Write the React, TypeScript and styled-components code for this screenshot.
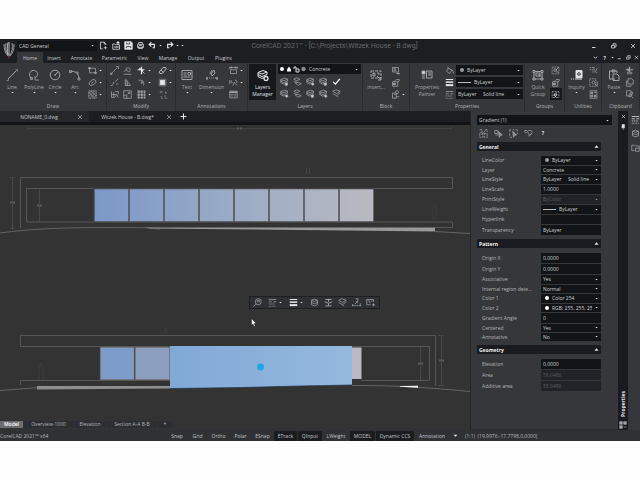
import React from 'react';
import styled, { createGlobalStyle } from 'styled-components';

const GlobalStyle = createGlobalStyle`
  * { box-sizing: border-box; }
  body { margin: 0; background: #fefefe; }
  button, input, select { font: inherit; color: inherit; margin: 0; padding: 0; border: 0; border-radius: 0; background: transparent; }
`;

/* ---------- icons, all on a 12 x 12 grid ---------- */
const stack = (
  <>
    <path d="M1 3.500 6 1.500l4 1.500-5 2z" />
    <path d="M1 5.500l4 2 5-2M1 7.500l4 2 5-2M1 3.500v4M10 3v2.500" />
  </>
);
const art: Record<string, React.ReactNode> = {
  line: (<><path d="M2 10 10.500 1.500" /><path d="M.5 11.500h2v-2M9.500.5h2v2" strokeWidth=".6" /></>),
  polyline: (<><path d="M3.500 9.500C-1 5 3 .5 6.500 1.500S11 6 7.500 8.500" /><path d="M7 7v4h4M2.500 8.500h2v2h-2z" strokeWidth=".8" /></>),
  circle: (<><circle cx="6" cy="6" r="4.800" /><path d="M6 6l3-3M5 6h2" /></>),
  arc: (<><path d="M1.500 2.500C6 1.500 10 5 10 9.500" /><path d="M.5 1.500h2v2h-2zM9 9h2v2H9zM7 3h2v2" strokeWidth=".8" /></>),
  rect: (<><path d="M2 3h8v6H2z" /><path d="M1 2h2v2H1zM9 8h2v2H9z" fill="currentColor" /></>),
  ellipse: (<><ellipse cx="6" cy="6" rx="5" ry="3.200" transform="rotate(-35 6 6)" /><path d="M4.500 7.500l3-3" /></>),
  hatch: (<><path d="M1 1h10v10H1z" strokeDasharray="2 1" /><path d="M1 5l4-4M1 9l8-8M3 11l8-8M7 11l4-4M1 3l8 8M4 1l7 7" /></>),
  trim: (<><path d="M2 10l8-8" /><path d="M.5 9.500h2v2h-2zM8 .5h3.500V4" /></>),
  offset: (<><path d="M4 4a3 3 0 1 1 4 4l-2-1zM1 11h10M1 8l4-4" /></>),
  move: (<><path d="M1 5h9M6 1v10M3 3l5 4" strokeWidth="1.600" /><path d="M7 7l3 3" /></>),
  erase: (<><path d="M1.500 8 7 2h3l1 2-5.500 6h-3z" /><path d="M4 5.500l3 3" /></>),
  break: (<><path d="M2 10l3-3M7 5l4-4" /><path d="M1 10h2M4 6h2M8 8h3" /></>),
  mirror: (<><path d="M3 2v8h7L4 2v8" /><path d="M6 6v4" /></>),
  fillet: (<><path d="M2 3h3c4 0 4 2 4 7" /><path d="M5 6h3M6.500 4v4" /></>),
  glow: (<><path d="M3 3h6v6H3z" fill="currentColor" /><path d="M1.500 1.500h9v9h-9z" strokeWidth=".4" /></>),
  stretch: (<><path d="M2 2v8h4L9 6l2 4M2 6h6M7 2h4v4M5 3v6" /></>),
  scale: (<><path d="M1 1h10v10H1zM1 7h4v4M6 6l3-3M6.500 3H9v2.500" /></>),
  pattern: (<><path d="M1 1h2.500v2.500H1zM5 1h2.500v2.500H5zM9 1h2v2.500H9zM1 5h2.500v2.500H1zM5 5h2.500v2.500H5zM9 5h2v2.500H9zM1 9h2.500v2H1zM5 9h2.500v2H5zM9 9h2v2H9z" fill="currentColor" strokeWidth=".5" /></>),
  explode: (<><path d="M3 1v3M1 3h4M8 4h3M9 2v3M3 8v3h2M8 7v4h3" strokeDasharray="2 1" /></>),
  text: (<><path d="M1 1.500h10v9H1z" /><path d="M2.500 4h3M2.500 6h3M7 3.500h2.500V6H7zM2.500 8h7" /></>),
  dimension: (<><path d="M5 5l3-4 1 3-3 3zM6 1l-2 4" /><path d="M0 9h2m1 0h1m1 0h1m1 0h1m1 0h3M1 8v3M11 8v3" /></>),
  linear: (<><path d="M1 2h10M1 1v3M11 1v3M2 5h8v5H2z" /><path d="M4 1l-2 1 2 1M8 1l2 1-2 1" /></>),
  leader: (<><path d="M1 3v5M3 3v3h2M8 3a2 2 0 1 1-1 3l-2 4M9 8l2 2" /></>),
  table: (<><path d="M1 1.500h10v9H1z" /><path d="M1 3h10" strokeWidth="2" /><path d="M4 3v7M8 3v7M1 6h10M1 8h10" strokeWidth=".5" /></>),
  layers: stack,
  layersManager: (<>{stack}<circle cx="9" cy="9.500" r="2" fill="#17181c" strokeWidth="1.300" /></>),
  layerA: (<>{stack}<circle cx="9" cy="9.500" r="1.500" fill="#dcdde0" /></>),
  layerB: (<><path d="M1 3 5 1l4 2-4 2zM3 8l4-1 4 2-4 2z" /><path d="M1 6l4 1" /></>),
  layerC: (<>{stack}<path d="M7 8h3v3H7z" fill="#dcdde0" /></>),
  check: <path d="M1.500 6.500l3 3 6-7" strokeWidth="1.800" stroke="#fff" />,
  insert: (<><path d="M1 2h10v7H1z" strokeDasharray="3 1" /><path d="M3 4h2v3H3zM7 4h2v2M7 7l4 4M11 8v3H8" /></>),
  block: (<><path d="M2 2h8v6H2zM4 3.500h2v3H4z" /><path d="M7 10h5M9.500 8v4" /></>),
  editBlock: (<><path d="M2 5h7v6H2zM4 5l3-3h4v2L8 6" /><path d="M3 7h3v2H3z" fill="currentColor" /></>),
  attr: (<><path d="M2 4h5v7H2zM4 6h2" /><circle cx="8" cy="3" r="2" /><path d="M7 9h4" /></>),
  painter: (<><path d="M1 2h3v3H1z" fill="#dcdde0" /><path d="M1 7h3M1 9h3" /><path d="M5.500 2H11v7H5.500zM7 4h3M7 6h3" /></>),
  bucket: (<><path d="M2 7l3-4 4 3-3 4zM4 4V1M8 4l3 3v3" /></>),
  weight: (<><path d="M1 2h10" strokeWidth="1.300" /><path d="M1 5.500h10" strokeWidth="2" /><path d="M1 9.500h10" strokeWidth="2.600" /></>),
  dashes: <path d="M1 2h10M1 5h4m2 0h4M1 8h2m1 0h2m1 0h2M1 11h1m1 0h1m1 0h1m1 0h1m1 0h1" />,
  group: (<><path d="M1 1.500h2v2H1zM9 1.500h2v2H9zM1 9h2v2H1zM9 9h2v2H9zM3 2.500h6M3 10h6M2 3.500V9M10 3.500V9" /><path d="M4 4h4v3H4zM6 6h2v2" /></>),
  editGroup: (<><path d="M1.500 1.500h9v9h-9z" strokeDasharray="2 1" /><path d="M4 4h3v3H4zM6 6l4-4M7 8h3" /></>),
  selectGroup: (<><path d="M1.500 2h9v8h-9z" strokeDasharray="1 1" /><path d="M4 5l4 1-2 3zM7 3v2M3 7h2" /></>),
  inquiry: (<><path d="M5 1.500h6V9H5z" fill="#e0e1e4" stroke="#e0e1e4" /><circle cx="8" cy="5" r="1.300" stroke="#36373b" /><path d="M0 10h1m1 0h1m1 0h7" strokeWidth="1.500" /></>),
  list: <path d="M1 2h2m1 0h4M1 5h2m1 0h4M4 8h2m1 0h1M8 8l3-5M9 9h2" />,
  region: (<><path d="M1 1h8v10H1z" strokeDasharray="2 1" /><circle cx="6" cy="6" r="2" /><path d="M8 8l3 3V5" /></>),
  calc: (<><path d="M1.500 1h9v10h-9z" /><path d="M3 3h2v2H3zM7 3h2v1M3 7h2v2H3zM7 7h2v2H7z" fill="currentColor" /></>),
  paste: (<><path d="M7 10H1.500V2H9v2M4 1h3v2H4z" /><path d="M5 5h4l2 2v4.500H5z" /></>),
  cut: (<><path d="M6 1v7M1 5h10M4 3v4" strokeWidth="1.500" /><circle cx="4.500" cy="9.500" r="1.300" /><circle cx="8" cy="9.500" r="1.300" /></>),
  copy: (<><path d="M4 1h5l2 2v5H4z" /><path d="M2 4v7h6V9M2 4h2" /></>),
  copyRef: (<><path d="M2 1h6v7H2zM8 3h2v3" /><circle cx="7" cy="7" r="2" /><path d="M9 9l2 2" /></>),
  newDoc: (<><path d="M5 10.500H2v-9h5l2 2v2M7 1.500V4h2" /><path d="M6.500 9h4M8.500 7v4" /></>),
  open: (<><path d="M1 4h3l1 1h5v6H1z" /><path d="M3 8h6M8 5V1M6 3l2-2 2 2" strokeWidth="1.400" /></>),
  save: (<><path d="M1 1h8.500L11 2.500V11H1z" fill="currentColor" /><path d="M3.500 2v2h4V2M3 9.500V7.500h6v2" stroke="#1d1e22" /></>),
  print: (<><path d="M2 4.500h8v4H2z" /><path d="M3.500 4V2h5v2M3.500 7v3h5V7M4 6h4" /></>),
  undo: <path d="M2 4.500h6.500v4.500H6M4.500 1.500l-3 3 3 3" strokeWidth="1.500" />,
  redo: <path d="M10 4.500H3.500v4.500H6M7.500 1.500l3 3-3 3" strokeWidth="1.500" />,
  min: <path d="M2 9h7" strokeWidth="1.800" />,
  restore: (<><path d="M1 5h6v5H1z" strokeWidth="1.500" /><path d="M4 4V1.500h6V8H8" strokeWidth="1.500" /></>),
  close: <path d="M2 2l8 8M10 2l-8 8" strokeWidth="1.500" />,
  plus: <path d="M6 1v10M1 6h10" strokeWidth="1.800" />,
  chevron: <path d="M2 4l4 4 4-4" strokeWidth="2" />,
  down: <path d="M1 4h10L6 9z" fill="currentColor" stroke="none" />,
  up: <path d="M1 9h10L6 3z" fill="currentColor" stroke="none" />,
  zoom: (<><circle cx="7" cy="5" r="4" /><path d="M4 8l-3.500 3.500M5 5h4M5 3.500h4" /></>),
  cursorSelect: (<><path d="M1 2h4v4H1zM2 8h3" /><path d="M6 3l5 5-2.500.5L7 11z" fill="#8b8c90" /></>),
  selectAll: (<><path d="M1 1h2M5 1h2M9 1h2v2M1 1v3M1 6v3M1 11h3M11 5v2" /><path d="M5 3l5 5-2.500.5L6 11z" fill="#8b8c90" /></>),
  quick: (<><path d="M1 2h4v3H1zM6 2h4l1 3-4 5" strokeDasharray="3 1" /><path d="M6 5l1 4 3-3" /></>),
  match: (<><path d="M1 1h3v3M8 1h3v3M1 5h4v6H1zM7 6h4v5H7z" strokeDasharray="3 1" /><path d="M4 7l5-5" /></>),
  cube: (<><path d="M2 3l4-1.500L10 3v6l-4 1.500L2 9z" /><path d="M2 3l4 1.500L10 3M2 6l4 1.500L10 6" /></>),
  updown: (<><path d="M2 2h8M6 1v4M1 5l5 2 5-2M6 7v3M2 10.500h8" strokeWidth="1.300" /></>),
  edge: (<><path d="M1 3 5 1l6 2-5 3zM1 6l5 3 5-4M6 9l2 2" /></>),
  angle: (<><path d="M5 1h3v3L4 8M5 4l3 3M0 10h2m1 0h2m1 0h2m1 0h3M1 8v3M11 7v4" /></>),
  note: (<><path d="M10 5V2H1v7h5" /><path d="M3 4h2v3M7 4h2M8 9h4M10 7v4" /></>),
  folder: (<><path d="M1 3h4l1 1h5v3M1 3v7h4" /><path d="M6 7h5v4H6z" /></>),
  pinned: (<><path d="M4 1h5v6H4z" fill="currentColor" /><path d="M2 7.500h8M6.500 8v4" /></>),
  dock: (<><path d="M1 1h4v4H1zM7 1h4v4H7zM1 7h4v4H1z" fill="currentColor" /><path d="M7 9h4" /></>),
};

const Svg = styled.svg<{ $size: number; $strong?: boolean }>`
  display: block;
  flex: none;
  width: ${(p) => p.$size}px;
  height: ${(p) => p.$size}px;
  fill: none;
  stroke: currentColor;
  color: ${(p) => (p.$strong ? '#e6e7ea' : '#a2a4a9')};
`;
const Icon = ({ name, size = 9, strong = false }: { name: string; size?: number; strong?: boolean }) => (
  <Svg $size={size} $strong={strong} viewBox="0 0 12 12" aria-hidden="true">{art[name]}</Svg>
);

/* ---------- shell ---------- */
const Window = styled.div`
  margin-top: 39px;
  min-width: 640px;
  background: #36373b;
  color: #b4b6ba;
  font: 5px/8px "Open Sans", "Noto Sans", sans-serif;
  overflow: hidden;
`;
const Header = styled.header`
  display: grid;
  grid-template-columns: 17px 1fr;
  background: #1d1e22;
`;
const LogoSvg = styled.svg`
  width: 14px;
  height: 20px;
  margin: 1px 0 0 2px;
`;
const TitleRow = styled.div`
  display: grid;
  grid-template-columns: 80px 88px 1fr 54px;
  align-items: center;
  height: 13px;
`;
const Title = styled.h1`
  margin: 0;
  text-align: center;
  font: 400 7px/10px Roboto, "Open Sans", sans-serif;
  color: #66686d;
  white-space: nowrap;
`;
const TitleCell = styled.div`
  padding-right: 102px;
`;
const WindowButtons = styled.div`
  display: flex;
  justify-content: space-between;
  padding: 0 3px 0 4px;
`;
const IconButton = styled.button<{ $w?: number; $h?: number; $dark?: boolean }>`
  display: flex;
  align-items: center;
  justify-content: center;
  flex: none;
  gap: 2px;
  width: ${(p) => p.$w ?? 12}px;
  height: ${(p) => p.$h ?? 12}px;
  color: #e0e1e4;
  background: ${(p) => (p.$dark ? '#17181c' : 'transparent')};
`;
const Quick = styled.div`
  display: flex;
  align-items: center;
`;
const TabRow = styled.nav`
  display: flex;
  height: 11px;
  align-items: stretch;
`;
const RibbonTab = styled.button<{ $w: number; $on?: boolean }>`
  width: ${(p) => p.$w}px;
  text-align: center;
  color: #c6c8cc;
  background: ${(p) => (p.$on ? '#36373b' : 'transparent')};
`;
const TabControls = styled.div`
  display: flex;
  align-items: center;
  justify-content: space-between;
  width: 49px;
  margin-left: auto;
  color: #e0e1e4;
`;

/* ---------- ribbon ---------- */
const Ribbon = styled.section`
  display: grid;
  grid-template-columns: 107fr 69fr 72fr 115fr 47fr 115fr 40fr 37fr 38fr;
  height: 48px;
  background: #36373b;
`;
const Group = styled.div`
  display: flex;
  flex-direction: column;
  min-width: 0;
  border-right: 1px solid #2a2b2f;
`;
const GroupBody = styled.div`
  display: flex;
  justify-content: center;
  height: 39px;
  padding-top: 1px;
`;
const GroupName = styled.div`
  text-align: center;
  line-height: 8px;
`;
const BigButton = styled.button<{ $w: number; $dark?: boolean }>`
  display: flex;
  flex-direction: column;
  align-items: center;
  flex: none;
  width: ${(p) => p.$w}px;
  height: 36px;
  padding-top: 5px;
  line-height: 7px;
  background: ${(p) => (p.$dark ? '#17181c' : 'transparent')};
  color: ${(p) => (p.$dark ? '#dfe0e3' : '#a6a8ac')};
`;
const BigLabel = styled.span`
  margin-top: 3px;
  white-space: nowrap;
`;
const Small = styled.div<{ $cols: string }>`
  display: grid;
  grid-template-columns: ${(p) => p.$cols};
  grid-auto-rows: 12px;
  align-items: center;
`;
const Big = ({ icon, label, w, menu = false, dark = false, size = 12 }: { icon: string; label: React.ReactNode; w: number; menu?: boolean; dark?: boolean; size?: number }) => (
  <BigButton type="button" $w={w} $dark={dark}>
    <Icon name={icon} size={size} strong={dark} />
    <BigLabel>{label}</BigLabel>
    {menu && <Icon name="down" size={3} strong />}
  </BigButton>
);
const Tool = ({ icon, menu = false, w = 12, h = 12, dark = false, size = 9, strong = false }: { icon: string; menu?: boolean; w?: number; h?: number; dark?: boolean; size?: number; strong?: boolean }) => (
  <IconButton type="button" $w={w} $h={h} $dark={dark} aria-label={icon}>
    <Icon name={icon} size={size} strong={strong || dark} />
    {menu && <Icon name="down" size={3} strong />}
  </IconButton>
);

/* ---------- fields ---------- */
const Field = styled.span<{ $h: number; $disabled?: boolean }>`
  display: flex;
  align-items: center;
  gap: 3px;
  min-width: 0;
  height: ${(p) => p.$h}px;
  padding: 0 3px 0 2px;
  color: ${(p) => (p.$disabled ? '#5c5e63' : '#cfd1d4')};
  background: ${(p) => (p.$disabled ? '#222328' : '#131418')};
`;
const NativeSelect = styled.select`
  appearance: none;
  flex: 1;
  min-width: 0;
  height: 8px;
  line-height: 8px;
  outline: none;
  &:disabled { color: inherit; opacity: 1; }
`;
const NativeInput = styled.input`
  flex: 1;
  min-width: 0;
  width: 100%;
  height: 8px;
  outline: none;
`;
const Dot = styled.i<{ $bright?: boolean }>`
  flex: none;
  width: 4px;
  height: 4px;
  margin-left: 2px;
  border-radius: 50%;
  background: ${(p) => (p.$bright ? '#ffffff' : '#9b9da1')};
`;
const Rule = styled.i`
  flex: none;
  width: 13px;
  height: 1px;
  background: #b9bbbf;
`;
const Choice = ({ id, label, value, mark, h = 9, disabled = false }: { id?: string; label?: string; value: string; mark?: React.ReactNode; h?: number; disabled?: boolean }) => (
  <Field $h={h} $disabled={disabled}>
    {mark}
    <NativeSelect id={id} aria-label={label} disabled={disabled} defaultValue={value}>
      <option>{value}</option>
    </NativeSelect>
    <Icon name="down" size={3} strong={!disabled} />
  </Field>
);
const SOLID = 'ByLayer\u00a0\u00a0\u00a0\u00a0\u00a0Solid line';

const LayerColumn = styled.div`
  display: flex;
  flex-direction: column;
  gap: 1px;
  width: 83px;
  margin-left: 2px;
`;
const LayerMarks = styled.svg`
  width: 26px;
  height: 8px;
  flex: none;
`;
const PropertyFields = styled.div`
  display: grid;
  grid-auto-rows: 12px;
  align-items: center;
  flex: 0 1 67px;
`;

/* ---------- work area ---------- */
const Work = styled.div`
  display: grid;
  grid-template-columns: 1fr 148px 10px 12px;
  background: #36373b;
`;
const Editor = styled.main`
  min-width: 0;
  background: #333333;
`;
const DocTabs = styled.div`
  display: flex;
  align-items: center;
  height: 14px;
  border-bottom: 3px solid #121316;
  background: #1d1e22;
`;
const DocTab = styled.button<{ $on?: boolean }>`
  display: flex;
  align-items: center;
  justify-content: flex-end;
  gap: ${(p) => (p.$on ? 12 : 19)}px;
  width: 89px;
  height: 11px;
  padding-right: 6px;
  white-space: nowrap;
  color: #c2c4c8;
  background: ${(p) => (p.$on ? '#1d1e22' : '#26272b')};
`;
const Canvas = styled.div`
  position: relative;
`;
const Drawing = styled.svg`
  display: block;
  width: 100%;
  height: auto;
`;
const FloatBar = styled.div`
  position: absolute;
  left: 53%;
  top: 171px;
  display: flex;
  align-items: center;
  justify-content: space-between;
  width: 131px;
  height: 13px;
  padding: 0 1px;
  border: 1px solid #1e1f23;
  background: #2f3034;
`;
const SheetTabs = styled.div`
  display: flex;
  align-items: center;
  height: 12px;
  gap: 1px;
`;
const SheetTab = styled.button<{ $w: number; $on?: boolean }>`
  width: ${(p) => p.$w}px;
  height: 7px;
  line-height: 7px;
  white-space: nowrap;
  color: ${(p) => (p.$on ? '#ffffff' : '#b4b6ba')};
  font-weight: ${(p) => (p.$on ? 600 : 400)};
  background: ${(p) => (p.$on ? '#6a6c70' : '#2d2e31')};
`;

/* ---------- properties panel ---------- */
const Panel = styled.aside`
  padding: 4px 6px 0;
  border-left: 1px solid #242529;
  border-bottom: 1px solid #2b2c30;
`;
const PanelTools = styled.div`
  display: flex;
  gap: 3px;
  height: 17px;
  padding-top: 2px;
`;
const Section = styled.fieldset`
  display: block;
  min-width: 0;
  margin: 0 11px 3px 0;
  padding: 0;
  border: 0;
`;
const SectionHead = styled.button`
  display: flex;
  align-items: center;
  justify-content: space-between;
  width: 100%;
  height: 9px;
  margin-bottom: 4px;
  padding: 0 2px;
  font-weight: 700;
  color: #f0f1f3;
  background: #1a1b20;
`;
const Rows = styled.div`
  padding-bottom: 1px;
`;
const PropRow = styled.div<{ $h: number }>`
  display: grid;
  grid-template-columns: 64px 1fr;
  align-items: center;
  height: ${(p) => p.$h}px;
`;
const PropLabel = styled.label`
  padding-left: 5px;
  white-space: nowrap;
`;
type Prop = { name: string; value: string; h: number; kind: 'select' | 'text'; mark?: React.ReactNode; disabled?: boolean };
const sections: { title: string; rows: Prop[] }[] = [
  {
    title: 'General',
    rows: [
      { name: 'LineColor', value: 'ByLayer', h: 10, kind: 'select', mark: <Dot /> },
      { name: 'Layer', value: 'Concrete', h: 9, kind: 'select' },
      { name: 'LineStyle', value: SOLID, h: 10, kind: 'select' },
      { name: 'LineScale', value: '1.0000', h: 10, kind: 'text' },
      { name: 'PrintStyle', value: 'ByColor', h: 10, kind: 'select', disabled: true },
      { name: 'LineWeight', value: 'ByLayer', h: 10, kind: 'select', mark: <Rule /> },
      { name: 'Hyperlink', value: '', h: 10, kind: 'text' },
      { name: 'Transparency', value: 'ByLayer', h: 11, kind: 'text' },
    ],
  },
  {
    title: 'Pattern',
    rows: [
      { name: 'Origin X', value: '0.0000', h: 11, kind: 'text' },
      { name: 'Origin Y', value: '0.0000', h: 11, kind: 'text' },
      { name: 'Associative', value: 'Yes', h: 10, kind: 'select' },
      { name: 'Internal region dete...', value: 'Normal', h: 9, kind: 'select' },
      { name: 'Color 1', value: 'Color 254', h: 10, kind: 'select', mark: <Dot $bright /> },
      { name: 'Color 2', value: 'RGB: 255, 255, 255', h: 9, kind: 'select', mark: <Dot $bright /> },
      { name: 'Gradient Angle', value: '0', h: 11, kind: 'text' },
      { name: 'Centered', value: 'Yes', h: 9, kind: 'select' },
      { name: 'Annotative', value: 'No', h: 9, kind: 'select' },
    ],
  },
  {
    title: 'Geometry',
    rows: [
      { name: 'Elevation', value: '0.0000', h: 11, kind: 'text' },
      { name: 'Area', value: '58.0486', h: 11, kind: 'text', disabled: true },
      { name: 'Additive area', value: '58.0486', h: 11, kind: 'text', disabled: true },
    ],
  },
];
const SideTitle = styled.div`
  display: flex;
  flex-direction: column;
  align-items: center;
  gap: 4px;
  padding: 2px 0 1px;
  background: #1a1b20;
`;
const VerticalText = styled.span`
  margin-top: auto;
  writing-mode: vertical-rl;
  transform: rotate(180deg);
  font-weight: 700;
  color: #e2e3e6;
`;
const Dock = styled.div`
  display: flex;
  flex-direction: column;
  align-items: flex-end;
  gap: 2px;
  padding-top: 2px;
`;

/* ---------- status bar ---------- */
const StatusBar = styled.footer`
  display: flex;
  align-items: center;
  height: 11px;
  background: #303135;
  white-space: nowrap;
`;
const Product = styled.span`
  width: 167px;
`;
const Toggle = styled.button<{ $w: number; $on?: boolean }>`
  width: ${(p) => p.$w}px;
  height: 10px;
  margin-right: 1px;
  color: #c2c4c8;
  background: ${(p) => (p.$on ? '#1b1c20' : 'transparent')};
`;
const Readout = styled.span`
  margin-left: 4px;
`;

const toggles: [string, number, boolean][] = [
  ['Snap', 20, false], ['Grid', 19, false], ['Ortho', 21, false], ['Polar', 21, false], ['ESnap', 21, false],
  ['ETrack', 23, true], ['QInput', 24, true], ['LWeight', 26, false], ['MODEL', 25, true], ['Dynamic CCS', 38, true], ['Annotation', 34, false],
];
const ribbonTabs: [string, number][] = [
  ['Home', 26], ['Insert', 22], ['Annotate', 33], ['Parametric', 33], ['View', 24], ['Manage', 26], ['Output', 30], ['Plugins', 25],
];
const panes = [94, 129, 164, 199, 234, 269, 304, 339];

const Logo = () => (
  <LogoSvg viewBox="0 0 14 20" aria-label="CorelCAD">
    <g fill="none" stroke="#9a9ca0">
      <path d="M2 4c0 5 1 9 4 12M4 3c-1 5 0 9 2 12M12 4c0 5-1 9-4 12M10 3c1 5 0 9-2 12" />
      <path d="M7 2v14M6 2.500c-1 5-1 8 0 12" stroke="#e4e5e8" strokeWidth=".8" />
    </g>
    <path d="M5.500 16h3L7 19z" fill="#6d2a2e" />
  </LogoSvg>
);

const Elevations = () => (
  <Drawing viewBox="0 125 470 293" role="img" aria-label="House elevations">
    <defs>
      <linearGradient id="glass" x1="94" x2="373" y1="0" y2="0" gradientUnits="userSpaceOnUse">
        <stop offset="0" stopColor="#7a98c8" /><stop offset=".5" stopColor="#9aabc6" /><stop offset="1" stopColor="#bab9c1" />
      </linearGradient>
      <linearGradient id="picked" x1="170" x2="352" y1="0" y2="0" gradientUnits="userSpaceOnUse">
        <stop offset="0" stopColor="#81a9d6" /><stop offset="1" stopColor="#95b8dd" />
      </linearGradient>
    </defs>
    <g fill="none" stroke="#424242">
      <path d="M27 128.500h425M27.500 127v3M451.500 127v3" />
      <path d="M12.500 177v51M39.500 189v33M10 177.500h5M10 228.500h5M306.500 168v6M309.500 168v6" stroke="#484848" />
      <path d="M433 220v-12l2-4 2 4-2 12M39 381v-13l2-5 2 5v12M164 333l2-6 1 6" stroke="#3d3d3d" />
      <path d="M420.500 347v33M441.500 335v50M438 335.500h6M438 385.500h6" stroke="#484848" />
    </g>
    <path d="M237 128.500h5M10 202.500h5M37 205.500h5M418 363.500h5M439 360.500h5" stroke="#5c5c5c" strokeWidth="2" strokeDasharray="2 1" />
    <g fill="none" stroke="#565656">
      <path d="M20.500 228v-50.500h432v11H26.500v33.500H452.500v6M435 227.500h17" />
      <path d="M20.500 346.500v-11H435.500v50M20.500 346.500H429.500v34M170 380.500H20.500v4.500M361 380.500h68" />
      <path d="M0 233C30 229 60 227.500 110 227.500S145 228 160 229M435 231.500l35 2M0 390.500l40-3M352 385.500c30 0 60 .5 118 6" stroke="#646464" />
    </g>
    <path d="M93 188h281v34H93z" fill="#3a3a3e" />
    {panes.map((x) => <path key={x} d={`M${x + 0.5} 189h34v32.500h-34z`} fill="url(#glass)" stroke="#5f5d60" strokeWidth=".7" />)}
    <path d="M145 227.500L435 227.500v4L150 228.500z" fill="#999" />
    <path d="M99 347h71v33H99z" fill="#3a3a3e" />
    <path d="M100.500 347.500h33.500v32h-33.500z" fill="#7e9cc9" stroke="#817c7b" strokeWidth=".7" />
    <path d="M135.500 347.500h34v32h-34z" fill="#8c9fc0" stroke="#817c7b" strokeWidth=".7" />
    <path d="M352 347.500h9.500v31.500H352z" fill="#bab9c1" />
    <path d="M37 386h133v2.500l-133 1z" fill="#8e8e8e" />
    <path d="M170 346h182v39q-60 1-110 2.500L170 388.500z" fill="url(#picked)" />
    <path d="M170 388.500l72-1q50-1.500 110-2.500" fill="none" stroke="#20354a" strokeWidth=".7" />
    <circle cx="260.500" cy="367" r="3.400" fill="#18a8e6" />
    <path d="M400 386l18-.3v2l-18-1z" fill="#f4f4f4" />
    <path d="M251.500 318.500v6.500l1.500-1 1 2.500 1.200-.5-1-2.500h2z" fill="#f2f2f2" stroke="#111" strokeWidth=".4" />
  </Drawing>
);

export default function App() {
  return (
    <>
      <GlobalStyle />
      <Window>
        <Header>
          <Logo />
          <div>
            <TitleRow>
              <Field $h={10} as="div">
                <NativeSelect aria-label="Workspace" defaultValue="CAD General"><option>CAD General</option></NativeSelect>
                <Icon name="down" size={3} strong />
              </Field>
              <Quick>
                <Tool icon="newDoc" w={13} strong /><Tool icon="open" strong /><Tool icon="save" strong /><Tool icon="print" strong />
                <Tool icon="undo" w={17} menu strong /><Tool icon="redo" w={17} menu strong /><Tool icon="down" w={4} size={3} strong />
              </Quick>
              <TitleCell><Title>CorelCAD 2021™ - [C:\Projects\Witzek House - B.dwg]</Title></TitleCell>
              <WindowButtons>
                <Tool icon="min" w={8} size={6} strong /><Tool icon="restore" w={8} size={6} strong /><Tool icon="close" w={8} size={6} strong />
              </WindowButtons>
            </TitleRow>
            <TabRow>
              {ribbonTabs.map(([name, w], i) => <RibbonTab key={name} type="button" $w={w} $on={i === 0}>{name}</RibbonTab>)}
              <TabControls>
                <Tool icon="chevron" w={8} size={5} strong />
                <IconButton type="button" $w={6} aria-label="Help"><b>?</b></IconButton>
                <Icon name="down" size={3} strong />
                <Tool icon="min" w={6} size={5} strong /><Tool icon="restore" w={6} size={5} strong /><Tool icon="close" w={6} size={5} strong />
              </TabControls>
            </TabRow>
          </div>
        </Header>

        <Ribbon>
          <Group>
            <GroupBody>
              <Big icon="line" label="Line" w={22} menu /><Big icon="polyline" label="PolyLine" w={22} menu />
              <Big icon="circle" label="Circle" w={20} menu /><Big icon="arc" label="Arc" w={20} menu />
              <Small $cols="20px"><Tool icon="rect" w={20} menu /><Tool icon="ellipse" w={20} menu /><Tool icon="hatch" w={20} menu /></Small>
            </GroupBody>
            <GroupName>Draw</GroupName>
          </Group>
          <Group>
            <GroupBody>
              <Small $cols="13px 13px 21px 19px">
                <Tool icon="trim" /><Tool icon="offset" /><Tool icon="move" w={20} menu strong /><Tool icon="erase" w={19} menu strong />
                <Tool icon="break" /><Tool icon="mirror" /><Tool icon="fillet" w={20} menu /><Tool icon="glow" w={19} menu strong />
                <Tool icon="stretch" /><Tool icon="scale" /><Tool icon="pattern" w={20} menu /><Tool icon="explode" w={16} />
              </Small>
            </GroupBody>
            <GroupName>Modify</GroupName>
          </Group>
          <Group>
            <GroupBody>
              <Big icon="text" label="Text" w={20} menu /><Big icon="dimension" label="Dimension" w={29} menu />
              <Small $cols="20px"><Tool icon="linear" w={20} menu /><Tool icon="leader" w={20} menu /><Tool icon="table" w={15} /></Small>
            </GroupBody>
            <GroupName>Annotations</GroupName>
          </Group>
          <Group>
            <GroupBody>
              <Big icon="layersManager" label={<>Layers<br />Manager</>} w={27} dark />
              <LayerColumn>
                <Choice label="Active layer" value="Concrete" h={10} mark={
                  <LayerMarks viewBox="0 0 26 8" aria-hidden="true">
                    <circle cx="2" cy="4" r="2" fill="#fff" /><path d="M9 1.500l2 3v2H7v-2z" fill="#fff" />
                    <path d="M14 4V2h2v2h3v3h-3V4" fill="none" stroke="#ddd" /><circle cx="23.500" cy="4" r="2.200" fill="#8b8d91" />
                  </LayerMarks>
                } />
                <Small $cols="repeat(5, 13px)">
                  <Tool icon="layerC" /><Tool icon="layerB" /><Tool icon="layerA" /><Tool icon="layerC" /><Tool icon="check" />
                  <Tool icon="layerA" /><Tool icon="layerB" /><Tool icon="layerC" /><Tool icon="layerA" /><Tool icon="edge" />
                </Small>
              </LayerColumn>
            </GroupBody>
            <GroupName>Layers</GroupName>
          </Group>
          <Group>
            <GroupBody>
              <Big icon="insert" label="Insert..." w={23} />
              <Small $cols="20px"><Tool icon="block" w={15} /><Tool icon="editBlock" w={15} /><Tool icon="attr" w={20} menu /></Small>
            </GroupBody>
            <GroupName>Block</GroupName>
          </Group>
          <Group>
            <GroupBody>
              <Big icon="painter" label={<>Properties<br />Painter</>} w={32} />
              <Small $cols="13px"><Tool icon="bucket" /><Tool icon="weight" strong /><Tool icon="dashes" /></Small>
              <PropertyFields>
                <Choice label="Line color" value="ByLayer" h={10} mark={<Dot />} />
                <Choice label="Line weight" value="ByLayer" h={10} mark={<Rule />} />
                <Choice label="Line style" value={SOLID} h={10} />
              </PropertyFields>
            </GroupBody>
            <GroupName>Properties</GroupName>
          </Group>
          <Group>
            <GroupBody>
              <Big icon="group" label={<>Quick<br />Group</>} w={23} />
              <Small $cols="13px"><Tool icon="editGroup" /><Tool icon="editBlock" /><Tool icon="selectGroup" dark /></Small>
            </GroupBody>
            <GroupName>Groups</GroupName>
          </Group>
          <Group>
            <GroupBody>
              <Big icon="inquiry" label="Inquiry" w={21} menu />
              <Small $cols="13px"><Tool icon="list" /><Tool icon="region" /><Tool icon="calc" /></Small>
            </GroupBody>
            <GroupName>Utilities</GroupName>
          </Group>
          <Group>
            <GroupBody>
              <Big icon="paste" label="Paste" w={19} menu />
              <Small $cols="13px"><Tool icon="cut" /><Tool icon="copy" /><Tool icon="copyRef" /></Small>
            </GroupBody>
            <GroupName>Clipboard</GroupName>
          </Group>
        </Ribbon>

        <Work>
          <Editor>
            <DocTabs>
              <DocTab type="button">NONAME_0.dwg<Icon name="close" size={6} /></DocTab>
              <DocTab type="button" $on>Witzek House - B.dwg*<Icon name="close" size={6} /></DocTab>
              <Tool icon="plus" w={11} h={11} size={7} strong />
            </DocTabs>
            <Canvas>
              <Elevations />
              <FloatBar>
                <Tool icon="zoom" /><Tool icon="dashes" w={19} menu /><Tool icon="weight" w={20} menu strong />
                <Tool icon="cube" /><Tool icon="updown" /><Tool icon="edge" /><Tool icon="angle" /><Tool icon="note" /><span />
              </FloatBar>
            </Canvas>
            <SheetTabs>
              <SheetTab type="button" $w={23} $on>Model</SheetTab>
              <SheetTab type="button" $w={49}>Overview-1000</SheetTab>
              <SheetTab type="button" $w={32}>Elevation</SheetTab>
              <SheetTab type="button" $w={50}>Section A-A B-B</SheetTab>
              <SheetTab type="button" $w={14}>+</SheetTab>
            </SheetTabs>
          </Editor>

          <Panel>
            <Choice label="Selection" value="Gradient (1)" h={10} />
            <PanelTools>
              <Tool icon="match" /><Tool icon="cursorSelect" /><Tool icon="selectAll" /><Tool icon="quick" />
              <IconButton type="button" aria-label="Help"><b>?</b></IconButton>
            </PanelTools>
            {sections.map((s) => (
              <Section key={s.title} aria-label={s.title}>
                <SectionHead type="button">{s.title}<Icon name="up" size={5} strong /></SectionHead>
                <Rows>
                  {s.rows.map((r) => {
                    const id = r.name.replace(/\W/g, '');
                    return (
                      <PropRow key={id} $h={r.h}>
                        <PropLabel htmlFor={id}>{r.name}</PropLabel>
                        {r.kind === 'select' ? (
                          <Choice id={id} value={r.value} mark={r.mark} h={r.h - 1} disabled={r.disabled} />
                        ) : (
                          <Field $h={r.h - 1} $disabled={r.disabled}><NativeInput id={id} defaultValue={r.value} readOnly={r.disabled} /></Field>
                        )}
                      </PropRow>
                    );
                  })}
                </Rows>
              </Section>
            ))}
          </Panel>
          <SideTitle>
            <Tool icon="close" w={6} h={6} size={5} strong />
            <Tool icon="pinned" w={6} h={7} size={6} strong />
            <VerticalText>Properties</VerticalText>
            <Icon name="dock" size={8} />
          </SideTitle>
          <Dock>
            <Tool icon="dashes" w={10} strong /><Tool icon="cube" w={10} /><Tool icon="folder" w={10} />
          </Dock>
        </Work>

        <StatusBar>
          <Product>CorelCAD 2021™ x64</Product>
          {toggles.map(([name, w, on]) => <Toggle key={name} type="button" $w={w} $on={on} aria-pressed={on}>{name}</Toggle>)}
          <Tool icon="down" w={11} h={10} size={5} strong />
          <Readout>(1:1)&nbsp; (19.9976,-17.7798,0.0000)</Readout>
        </StatusBar>
      </Window>
    </>
  );
}
